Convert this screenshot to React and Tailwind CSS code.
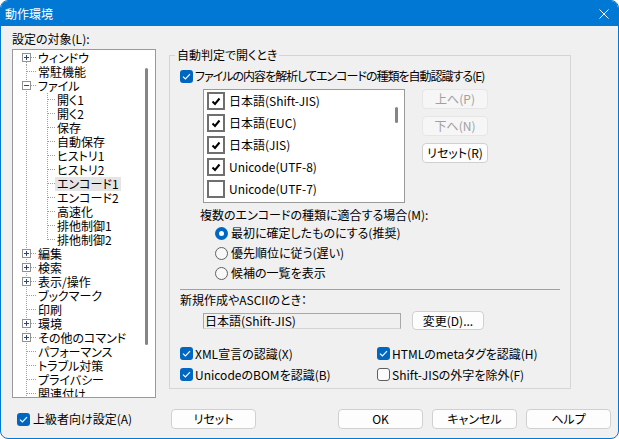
import React from 'react';

const FONT = "font-['Noto_Sans_CJK_JP',sans-serif] [font-feature-settings:'palt']";

function WinCheck({ checked }) {
  return checked ? (
    <span className="flex h-[13px] w-[13px] shrink-0 items-center justify-center rounded-[3px] bg-[#0067c0]">
      <svg width="9" height="7" viewBox="0 0 9 7">
        <path d="M1 3.6 L3.4 6 L8 1.2" fill="none" stroke="white" strokeWidth="1.2" />
      </svg>
    </span>
  ) : (
    <span className="h-[13px] w-[13px] shrink-0 rounded-[3px] border border-[#5f5f5f] bg-[#fbfbfb]" />
  );
}

function Radio({ on }) {
  return on ? (
    <span className="flex h-[13px] w-[13px] shrink-0 items-center justify-center rounded-full bg-[#0067c0]">
      <span className="h-[5px] w-[5px] rounded-full bg-white" />
    </span>
  ) : (
    <span className="h-[13px] w-[13px] shrink-0 rounded-full border border-[#5f5f5f] bg-[#f8f8f8]" />
  );
}

function Connector({ level, exp, first, last }) {
  const w = level === 0 ? 23 : 42;
  return (
    <svg width={w} height="14" className="shrink-0" shapeRendering="crispEdges">
      <g stroke="#a0a0a0" strokeDasharray="1 1" fill="none">
        <line x1="13.5" y1={first ? 7 : 0} x2="13.5" y2="14" />
        {level === 0 ? (
          <line x1="14" y1="6.5" x2="23" y2="6.5" />
        ) : (
          <>
            <line x1="34.5" y1="0" x2="34.5" y2={last ? 7 : 14} />
            <line x1="35" y1="6.5" x2="42" y2="6.5" />
          </>
        )}
      </g>
      {exp && (
        <g>
          <rect x="9.5" y="2.5" width="8" height="8" fill="white" stroke="#919191" />
          <line x1="11" y1="6.5" x2="16" y2="6.5" stroke="#2a4683" />
          {exp === '+' && <line x1="13.5" y1="4" x2="13.5" y2="9" stroke="#2a4683" />}
        </g>
      )}
    </svg>
  );
}

const tree = [
  { l: 0, t: 'ウィンドウ', e: '+', first: true },
  { l: 0, t: '常駐機能' },
  { l: 0, t: 'ファイル', e: '-' },
  { l: 1, t: '開く1' },
  { l: 1, t: '開く2' },
  { l: 1, t: '保存' },
  { l: 1, t: '自動保存' },
  { l: 1, t: 'ヒストリ1' },
  { l: 1, t: 'ヒストリ2' },
  { l: 1, t: 'エンコード1', sel: true },
  { l: 1, t: 'エンコード2' },
  { l: 1, t: '高速化' },
  { l: 1, t: '排他制御1' },
  { l: 1, t: '排他制御2', last: true },
  { l: 0, t: '編集', e: '+' },
  { l: 0, t: '検索', e: '+' },
  { l: 0, t: '表示/操作', e: '+' },
  { l: 0, t: 'ブックマーク' },
  { l: 0, t: '印刷' },
  { l: 0, t: '環境', e: '+' },
  { l: 0, t: 'その他のコマンド', e: '+' },
  { l: 0, t: 'パフォーマンス' },
  { l: 0, t: 'トラブル対策' },
  { l: 0, t: 'プライバシー' },
  { l: 0, t: '関連付け' },
];

const encodings = [
  { t: '日本語(Shift-JIS)', c: true },
  { t: '日本語(EUC)', c: true },
  { t: '日本語(JIS)', c: true },
  { t: 'Unicode(UTF-8)', c: true },
  { t: 'Unicode(UTF-7)', c: false },
];

const btn = 'flex items-center justify-center rounded-[4px] border border-[#d0d0d0] bg-[#fdfdfd] text-black';
const btnDis = 'flex items-center justify-center rounded-[4px] border border-[#e6e6e6] bg-[#f6f6f6] text-[#a0a0a0]';

export default function App() {
  return (
    <div className={`h-[439px] w-[619px] bg-white text-[12px] leading-[14px] text-black ${FONT}`}>
      <div className="flex h-full w-full flex-col overflow-hidden rounded-[8px] border border-[#0078d4] bg-[#f0f0f0]">
        {/* title bar */}
        <div className="flex h-[25px] shrink-0 items-center justify-between bg-[#0078d4] pl-[4px] pr-[9px] text-white">
          <span>動作環境</span>
          <svg width="10" height="10" viewBox="0 0 10 10">
            <path d="M0.5 0.5 L9.5 9.5 M9.5 0.5 L0.5 9.5" stroke="white" strokeWidth="1" fill="none" />
          </svg>
        </div>

        <div className="flex h-[372px] shrink-0">
          {/* left column */}
          <div className="ml-[11px] flex w-[144px] flex-col">
            <div className="mt-[6px] h-[14px]">設定の対象(L):</div>
            <div className="mt-[3px] flex h-[349px] border border-[#9a9a9a] bg-white">
              <div className="flex-1 overflow-hidden pt-[1px]">
                {tree.map((r, i) => (
                  <div key={i} className="flex h-[14px] items-center whitespace-nowrap">
                    <Connector level={r.l} exp={r.e} first={r.first} last={r.last} />
                    <span className={`px-[2px] leading-[14px] ${r.sel ? 'bg-[#e5e5e5]' : ''}`}>{r.t}</span>
                  </div>
                ))}
              </div>
              <div className="w-[12px] shrink-0">
                <div className="ml-[2px] mt-[18px] h-[277px] w-[3px] rounded-full bg-[#858585]" />
              </div>
            </div>
          </div>

          {/* right column */}
          <div className="ml-[13px] mt-[29px] h-[334px] w-[402px] border border-[#d5d5d5]">
            <div className="-mt-[8px] ml-[5px] w-fit bg-[#f0f0f0] px-[2px]">自動判定で開くとき</div>
            <div className="px-[10px]">
              <div className="mt-[7px] flex h-[14px] items-center gap-[2px]">
                <WinCheck checked />
                <span className="tracking-[-1px]">ファイルの内容を解析してエンコードの種類を自動認識する(E)</span>
              </div>

              <div className="mt-[6px] flex">
                <div className="ml-[23px] flex h-[114px] w-[202px] border border-[#9a9a9a] bg-white">
                  <div className="flex-1 pl-[3px]">
                    {encodings.map((e, i) => (
                      <div key={i} className="flex h-[22px] items-center gap-[4px]">
                        <span className="flex h-[18px] w-[18px] shrink-0 items-center justify-center border-2 border-[#6f6f6f] bg-white">
                          {e.c && (
                            <svg width="10" height="9" viewBox="0 0 10 9">
                              <path d="M1.5 4.5 L4 7 L8.5 1.5" fill="none" stroke="black" strokeWidth="2" />
                            </svg>
                          )}
                        </span>
                        <span>{e.t}</span>
                      </div>
                    ))}
                  </div>
                  <div className="w-[11px] shrink-0">
                    <div className="ml-[2px] mt-[17px] h-[16px] w-[3px] rounded-full bg-[#858585]" />
                  </div>
                </div>
                <div className="ml-[17px] flex flex-col gap-[7px]">
                  <div className={`${btnDis} h-[20px] w-[66px]`}>上へ(P)</div>
                  <div className={`${btnDis} h-[20px] w-[66px]`}>下へ(N)</div>
                  <div className={`${btn} h-[20px] w-[66px]`}>リセット(R)</div>
                </div>
              </div>

              <div className="ml-[20px] mt-[5px] h-[14px]">複数のエンコードの種類に適合する場合(M):</div>
              <div className="ml-[35px] mt-[1px]">
                <div className="flex h-[20px] items-center gap-[3px]"><Radio on /><span>最初に確定したものにする(推奨)</span></div>
                <div className="flex h-[20px] items-center gap-[3px]"><Radio /><span>優先順位に従う(遅い)</span></div>
                <div className="flex h-[20px] items-center gap-[3px]"><Radio /><span>候補の一覧を表示</span></div>
              </div>

              <div className="mt-[6px] h-px bg-[#a0a0a0]" />

              <div className="mt-[3px] h-[14px]">新規作成やASCIIのとき：</div>
              <div className="mt-[4px] flex h-[19px] items-center">
                <div className="ml-[23px] h-[16px] w-[198px] border border-[#a8a8a8] border-b-[#d4d4d4] bg-[#f0f0f0] pl-[1px] leading-[13px]">日本語(Shift-JIS)</div>
                <div className={`${btn} ml-[11px] h-[19px] w-[72px]`}>変更(D)...</div>
              </div>

              <div className="mt-[13px] grid grid-cols-[197px_1fr]">
                <div className="flex h-[21px] items-center gap-[2px]"><WinCheck checked /><span>XML宣言の認識(X)</span></div>
                <div className="flex h-[21px] items-center gap-[2px]"><WinCheck checked /><span>HTMLのmetaタグを認識(H)</span></div>
                <div className="flex h-[21px] items-center gap-[2px]"><WinCheck checked /><span>UnicodeのBOMを認識(B)</span></div>
                <div className="flex h-[21px] items-center gap-[2px]"><WinCheck /><span>Shift-JISの外字を除外(F)</span></div>
              </div>
            </div>
          </div>
        </div>

        {/* bottom row */}
        <div className="mt-[11px] flex h-[20px] items-center">
          <div className="ml-[16px] flex w-[154px] items-center gap-[3px]">
            <WinCheck checked />
            <span>上級者向け設定(A)</span>
          </div>
          <div className={`${btn} h-[20px] w-[85px] border-[#0067c0]`}>リセット</div>
          <div className={`${btn} ml-[82px] h-[20px] w-[85px]`}>OK</div>
          <div className={`${btn} ml-[9px] h-[20px] w-[85px]`}>キャンセル</div>
          <div className={`${btn} ml-[9px] h-[20px] w-[85px]`}>ヘルプ</div>
        </div>
      </div>
    </div>
  );
}
